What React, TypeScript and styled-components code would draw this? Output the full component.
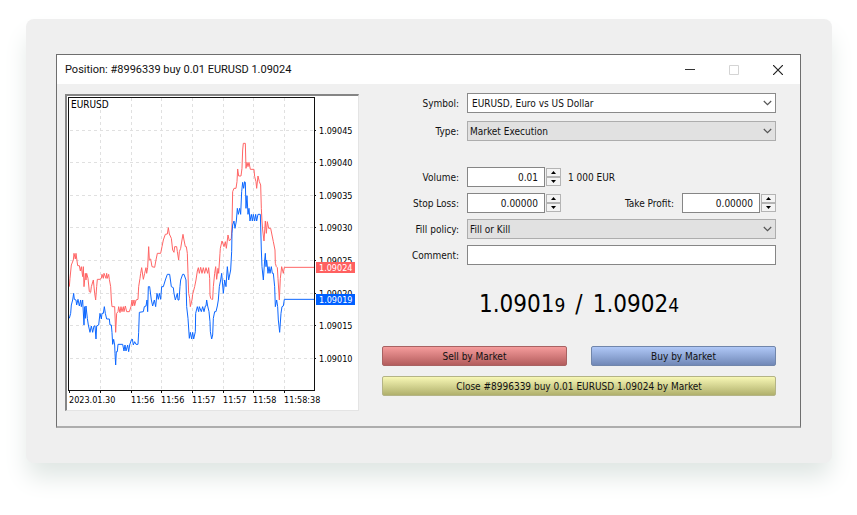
import React from "react";
import styled, { createGlobalStyle } from "styled-components";

const uiFont = '"DejaVu Sans Condensed", "DejaVu Sans", sans-serif';

const GlobalStyle = createGlobalStyle`
  * { box-sizing: border-box; }
  body {
    margin: 0;
    background: #fff;
    color: #111;
    font-family: ${uiFont};
    font-size: 10px;
  }
  button, input, select { font: inherit; color: inherit; }
`;

const Page = styled.main`
  padding: 19px 25px 52px 26px;
`;

const Backdrop = styled.div`
  padding: 35px 31px 35px 30px;
  border-radius: 8px;
  background: #efefef;
  box-shadow: 0 16px 24px -2px #dfe6e3;
`;

const Dialog = styled.section`
  border: 1px solid #6e6e6e;
  border-bottom: 2px solid #adadad;
  background: #f0f0f0;
`;

const TitleBar = styled.header`
  display: flex;
  align-items: center;
  height: 29px;
  padding: 0 0 0 8px;
  background: #fff;
`;

const Title = styled.h1`
  flex: 1;
  margin: 0;
  font: 400 11px Roboto, "Open Sans", sans-serif;
`;

const WindowButton = styled.button`
  display: grid;
  place-items: center;
  width: 44px;
  height: 29px;
  padding: 0;
  border: 0;
  background: transparent;
`;

const Content = styled.div`
  display: flex;
  align-items: flex-start;
  gap: 23px;
  padding: 9px 24px 15px 8px;
`;

const ChartFrame = styled.figure`
  flex: none;
  margin: 1px 0 0;
  border: 1px solid #e4e4e4;
  border-top: 2px solid #858585;
  border-left: 2px solid #858585;
  background: #fff;
  svg { display: block; }
`;

const Form = styled.form`
  flex: 1;
  min-width: 0;
`;

const Fields = styled.div<{ $gap: number }>`
  display: grid;
  grid-template-columns: 77px 1fr;
  align-items: center;
  gap: ${(p) => p.$gap}px 8px;
  margin-bottom: 26px;
`;

const Label = styled.label`
  text-align: right;
  white-space: nowrap;
`;

const Line = styled.div`
  display: flex;
  align-items: center;
`;

const SelectBox = styled.div`
  display: grid;
  align-items: center;
  > * { grid-area: 1 / 1; }
  > svg { justify-self: end; margin-right: 4px; pointer-events: none; }
`;

const Select = styled.select<{ $white?: boolean }>`
  appearance: none;
  width: 100%;
  height: 20px;
  padding: 0 20px 0 ${(p) => (p.$white ? 4 : 2)}px;
  border: 1px solid ${(p) => (p.$white ? "#8a8a8a" : "#adadad")};
  border-radius: 0;
  background: ${(p) => (p.$white ? "#fff" : "#e1e1e1")};
`;

const TextInput = styled.input`
  width: 100%;
  height: 20px;
  padding: 0 4px;
  border: 1px solid #868686;
  background: #fff;
`;

const NumberInput = styled(TextInput)`
  width: 78px;
  padding-right: 6px;
  text-align: right;
`;

const Stepper = styled.div`
  display: grid;
  margin-left: 1px;
`;

const StepButton = styled.button`
  display: grid;
  place-items: center;
  width: 15px;
  height: 9px;
  padding: 0;
  border: 1px solid #b4b4b4;
  background: #f4f4f4;
`;

const Unit = styled.span`
  margin-left: 7px;
`;

const ProfitLabel = styled(Label)`
  margin: 0 8px 0 auto;
`;

const Quote = styled.output`
  display: block;
  margin: -3px 0 25px;
  color: #000;
  font-size: 24px;
  line-height: 32px;
  text-align: center;
  small { font-size: 19px; }
`;

const Slash = styled.span`
  margin: 0 10px;
`;

const Actions = styled.div`
  display: grid;
  grid-template-columns: 1fr 1fr;
  gap: 10px 24px;
`;

const tones = {
  sell: ["#f59c9c", "#b35d5d", "#a86262"],
  buy: ["#b0c8f7", "#7188b7", "#7186ab"],
  close: ["#f7f7b5", "#b0b06c", "#b4b486"],
};

const ActionButton = styled.button<{ $tone: keyof typeof tones; $wide?: boolean }>`
  height: 20px;
  padding: 0;
  grid-column: ${(p) => (p.$wide ? "1 / -1" : "auto")};
  border: 1px solid ${(p) => tones[p.$tone][2]};
  border-radius: 2px;
  background: linear-gradient(${(p) => tones[p.$tone][0]}, ${(p) => tones[p.$tone][1]});
`;

const Chevron = () => (
  <svg width="9" height="6" viewBox="0 0 9 6" fill="none" stroke="#555" aria-hidden="true">
    <path d="M.8 1 4.5 4.6 8.2 1" strokeWidth="1.2" />
  </svg>
);

const SpinButtons = ({ name }: { name: string }) => (
  <Stepper>
    <StepButton type="button" aria-label={`Increase ${name}`}>
      <svg width="5" height="3" viewBox="0 0 5 3"><path d="M0 3 2.5 0 5 3z" /></svg>
    </StepButton>
    <StepButton type="button" aria-label={`Decrease ${name}`}>
      <svg width="5" height="3" viewBox="0 0 5 3"><path d="M0 0 2.5 3 5 0z" /></svg>
    </StepButton>
  </Stepper>
);

/* Tick series, in thirds of a pixel. */
const ask =
  "40,605 42,580 46,540 52,525 54,505 58,522 60,505 65,542 70,542 73,558 76,545 80,575 82,545 84,605 88,565 90,585 92,565 96,580 100,620 104,622 106,605 112,585 116,625 119,645 122,605 124,583 132,583 136,580 138,568 142,580 144,565 150,580 152,565 154,580 158,568 160,583 164,605 166,645 168,665 176,665 179,742 182,685 186,680 188,665 192,683 195,665 198,680 202,665 204,680 208,663 212,680 220,680 225,665 228,645 230,663 234,645 236,662 240,645 246,643 248,605 252,580 254,565 257,548 262,583 266,565 270,548 272,565 275,548 278,485 280,525 284,522 288,545 296,547 300,525 304,505 314,505 318,485 322,465 328,448 334,447 337,428 340,447 346,460 350,495 354,502 356,485 362,485 364,500 368,525 370,500 374,490 378,465 381,448 384,465 388,485 391,485 394,505 396,565 398,625 401,640 403,665 408,645 410,628 416,605 420,585 424,558 427,548 430,565 434,547 438,565 442,548 446,565 450,548 455,565 458,548 461,580 462,630 464,640 467,643 470,643 472,605 476,565 479,545 482,583 486,550 488,565 492,505 493,490 498,468 504,485 508,470 511,490 516,450 520,468 526,460 528,420 530,320 534,310 540,310 543,290 545,252 548,273 555,273 558,250 560,195 562,175 568,175 570,250 573,232 576,245 579,232 583,253 594,253 596,275 600,290 602,310 606,273 610,290 614,300 616,370 618,408 620,435 624,468 628,408 631,445 634,410 638,430 644,430 648,450 652,470 657,495 658,535 661,545 664,548 666,580 670,645 673,580 677,545 682,565 685,547 775,547";
const bid =
  "40,700 44,685 46,660 50,645 53,625 55,643 60,645 62,660 66,643 70,663 74,645 76,665 80,645 84,720 86,665 88,700 90,663 94,700 97,720 102,742 106,723 110,742 114,723 117,723 120,762 122,723 128,720 132,685 136,702 138,685 142,685 145,665 148,685 152,702 160,702 162,720 166,720 168,742 170,778 173,763 176,780 177,805 179,840 181,800 184,800 186,778 200,778 204,798 207,780 210,798 215,780 218,800 221,780 226,765 229,762 232,780 236,770 240,778 246,778 248,742 250,682 262,680 265,665 270,663 273,645 275,680 277,605 281,605 286,645 290,663 295,645 299,665 303,625 307,643 310,625 314,643 317,605 322,605 328,585 334,568 341,568 346,605 352,608 354,625 358,645 364,625 366,645 369,645 372,605 374,585 380,568 384,568 390,585 392,665 396,700 400,760 403,742 407,762 410,742 413,762 418,740 419,685 424,665 428,680 430,665 436,680 440,665 444,680 448,663 450,663 452,645 455,663 459,680 462,710 463,740 467,762 470,750 472,700 476,680 480,680 484,663 487,645 490,605 494,585 497,565 502,625 506,585 510,605 514,545 518,585 524,555 527,500 528,445 530,420 534,408 537,430 541,408 544,370 547,388 551,370 554,388 557,320 560,292 563,310 566,290 568,292 570,370 573,332 576,388 579,370 582,408 586,388 589,408 592,388 596,408 599,388 602,408 606,388 613,388 616,495 618,545 622,585 626,525 628,505 630,545 632,525 636,565 639,545 642,565 646,545 649,565 652,565 656,605 658,665 662,645 665,665 667,705 671,742 675,685 678,665 682,663 685,643 775,643";

const gridX = [100, 131, 161, 192, 223, 253, 284];
const scale = [
  { y: 130, text: "1.09045" },
  { y: 162, text: "1.09040" },
  { y: 195, text: "1.09035" },
  { y: 227, text: "1.09030" },
  { y: 260, text: "1.09025" },
  { y: 293, text: "1.09020" },
  { y: 325, text: "1.09015" },
  { y: 358, text: "1.09010" },
];
const times = [
  { x: 69, text: "2023.01.30" },
  { x: 131, text: "11:56" },
  { x: 161, text: "11:56" },
  { x: 192, text: "11:57" },
  { x: 223, text: "11:57" },
  { x: 253, text: "11:58" },
  { x: 284, text: "11:58:38" },
];
const tags = [
  { y: 262, color: "#ff6060", text: "1.09024" },
  { y: 294, color: "#0060ff", text: "1.09019" },
];

const ChartText = styled.text`
  font-family: ${uiFont};
  font-size: 9px;
  fill: #000;
`;

const SymbolText = styled(ChartText)`
  font-size: 10px;
`;

const TagText = styled(ChartText)`
  fill: #fff;
`;

const PriceChart = () => (
  <svg width="291" height="314" viewBox="67 96 291 314" role="img" aria-label="EURUSD tick chart">
    <g stroke="#e0e0e0" strokeDasharray="3 3" shapeRendering="crispEdges">
      {gridX.map((x) => <path key={x} d={`M${x}.5 98V390`} />)}
      {scale.map(({ y }) => <path key={y} d={`M70 ${y}.5H314`} />)}
    </g>
    <g transform="translate(56 85) scale(.33333)" fill="none" strokeWidth="3">
      <polyline points={ask} stroke="#ff6464" />
      <polyline points={bid} stroke="#0c66ff" />
    </g>
    <g fill="none" stroke="#111" shapeRendering="crispEdges">
      <path d="M68.5 97.5H314.5V390.5H68.5z" />
      {scale.map(({ y }) => <path key={y} d={`M314 ${y}.5h2`} />)}
      {[69, ...gridX].map((x) => <path key={x} d={`M${x}.5 390v3`} />)}
    </g>
    <SymbolText x="71" y="108">EURUSD</SymbolText>
    {scale.map(({ y, text }) => <ChartText key={y} x="319" y={y + 4}>{text}</ChartText>)}
    {times.map(({ x, text }) => <ChartText key={x} x={x} y="403">{text}</ChartText>)}
    {tags.map(({ y, color, text }) => (
      <g key={y}>
        <rect x="316" y={y} width="39" height="11" fill={color} />
        <TagText x="319" y={y + 9}>{text}</TagText>
      </g>
    ))}
  </svg>
);

export default function App() {
  return (
    <Page>
      <GlobalStyle />
      <Backdrop>
        <Dialog>
          <TitleBar>
            <Title>Position: #8996339 buy 0.01 EURUSD 1.09024</Title>
            <WindowButton aria-label="Minimize">
              <svg width="10" height="10" viewBox="0 0 10 10"><path d="M0 4.5h10" stroke="#333" /></svg>
            </WindowButton>
            <WindowButton aria-label="Maximize" disabled>
              <svg width="10" height="10" viewBox="0 0 10 10"><path d="M.5.5h9v9h-9z" fill="none" stroke="#d4d4d4" /></svg>
            </WindowButton>
            <WindowButton aria-label="Close window">
              <svg width="10" height="10" viewBox="0 0 10 10"><path d="m0 0 10 10M10 0 0 10" stroke="#222" strokeWidth="1.2" /></svg>
            </WindowButton>
          </TitleBar>
          <Content>
            <ChartFrame><PriceChart /></ChartFrame>
            <Form onSubmit={(e) => e.preventDefault()}>
              <Fields $gap={8}>
                <Label htmlFor="symbol">Symbol:</Label>
                <SelectBox>
                  <Select id="symbol" $white><option>EURUSD, Euro vs US Dollar</option></Select>
                  <Chevron />
                </SelectBox>
                <Label htmlFor="type">Type:</Label>
                <SelectBox>
                  <Select id="type"><option>Market Execution</option></Select>
                  <Chevron />
                </SelectBox>
              </Fields>
              <Fields $gap={6}>
                <Label htmlFor="volume">Volume:</Label>
                <Line>
                  <NumberInput id="volume" defaultValue="0.01" />
                  <SpinButtons name="volume" />
                  <Unit>1 000 EUR</Unit>
                </Line>
                <Label htmlFor="stop">Stop Loss:</Label>
                <Line>
                  <NumberInput id="stop" defaultValue="0.00000" />
                  <SpinButtons name="stop loss" />
                  <ProfitLabel htmlFor="profit">Take Profit:</ProfitLabel>
                  <NumberInput id="profit" defaultValue="0.00000" />
                  <SpinButtons name="take profit" />
                </Line>
                <Label htmlFor="fill">Fill policy:</Label>
                <SelectBox>
                  <Select id="fill"><option>Fill or Kill</option></Select>
                  <Chevron />
                </SelectBox>
                <Label htmlFor="comment">Comment:</Label>
                <TextInput id="comment" />
              </Fields>
              <Quote>1.0901<small>9</small><Slash>/</Slash>1.0902<small>4</small></Quote>
              <Actions>
                <ActionButton type="button" $tone="sell">Sell by Market</ActionButton>
                <ActionButton type="button" $tone="buy">Buy by Market</ActionButton>
                <ActionButton type="button" $tone="close" $wide>
                  Close #8996339 buy 0.01 EURUSD 1.09024 by Market
                </ActionButton>
              </Actions>
            </Form>
          </Content>
        </Dialog>
      </Backdrop>
    </Page>
  );
}
